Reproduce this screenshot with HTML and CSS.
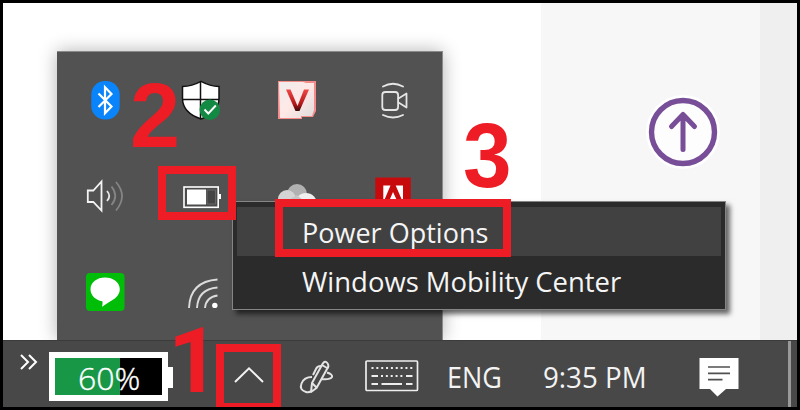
FILE: index.html
```html
<!DOCTYPE html>
<html lang="en">
<head>
<meta charset="utf-8">
<title>System tray</title>
<link rel="stylesheet" href="styles.css">
</head>
<body>
<div class="screen">
  <main class="desktop">
    <div class="page"></div>
    <div class="sidebar">
      <svg class="scroll-top" viewBox="0 0 76 76">
        <circle cx="38" cy="38" r="37" fill="#fff"/>
        <circle cx="38" cy="38" r="31.500" fill="#fdfdfd" stroke="#774e97" stroke-width="5.400"/>
        <path d="M38 55.500V21M26.500 32.500 38 20.500l11.500 12" fill="none" stroke="#774e97" stroke-width="5" stroke-linecap="round" stroke-linejoin="round"/>
      </svg>
    </div>
    <div class="scroll"></div>
    <div class="tray">
      <svg viewBox="0 0 40 40">
        <rect x="6.300" y="1" width="28.400" height="38.500" rx="13.500" fill="#0a84fa"/>
        <path d="M13.500 13.500 26.500 26.500l-6.500 6.700V7.200l6.500 6.700L13.500 27" fill="none" stroke="#fff" stroke-width="2.200"/>
      </svg>
      <svg viewBox="0 0 40 40">
        <path d="M1.500 6.500C8.500 6.200 14 4.500 20 1.300c6 3.200 11.500 4.900 18 5.200v11.800C38 28.500 30 35.500 20 39 9.500 35.500 1.500 28.500 1.500 18.300Z" fill="#fff" stroke="#111" stroke-width="1.500"/>
        <path d="M19.500 1.500V38M2 19.500h36" stroke="#111" stroke-width="1.500"/>
        <circle cx="28.800" cy="29.800" r="10.200" fill="#138a43"/>
        <path d="m23.500 29.500 3.800 4 7.500-8" fill="none" stroke="#fff" stroke-width="1.900"/>
      </svg>
      <svg viewBox="0 0 40 40">
        <defs><linearGradient id="tile" x2="1" y2="1"><stop stop-color="#ededed"/><stop offset=".5" stop-color="#ffe8e6"/><stop offset="1" stop-color="#ddd"/></linearGradient>
        <linearGradient id="vee" x2="0" y2="1"><stop stop-color="#ef4944"/><stop offset=".7" stop-color="#ae1518"/><stop offset="1" stop-color="#330809"/></linearGradient></defs>
        <path d="M1 1h38v30l-3 6H25v2H1Z" fill="#f58c8a"/>
        <path d="M2 2h24l3 1h8v27l-2 6H24v2H3Z" fill="url(#tile)"/>
        <path d="M9 9.500h4.500l7 16.500 6.500-16.500h5L22.500 31h-4Z" fill="url(#vee)"/>
      </svg>
      <svg viewBox="0 0 40 40">
        <g fill="none" stroke="#e5e5e5" stroke-width="1.800" stroke-linecap="round" stroke-linejoin="round">
        <rect x="9.300" y="12" width="15.800" height="18" rx="3"/>
        <path d="M25.500 18.500 33.500 13.500v14l-8-5M10 6.500q10-5.500 20 0M10 35q10 5 20 0"/></g>
      </svg>
      <svg viewBox="0 0 40 40">
        <g fill="none" stroke-width="1.800">
        <path d="M2.800 14.500h5.500l8.200-9v29l-8.200-8.500H2.800Z" stroke="#f4f4f4"/>
        <path d="M22 15q4.500 5 0 10" stroke="#e9e9e9"/>
        <path d="M26.500 10.500q7.500 9.500 0 18.500M31 6q12 14 0 28.500" stroke="#858585"/></g>
      </svg>
      <svg viewBox="0 0 40 40">
        <rect x="3" y="11" width="34.200" height="20.300" fill="#4b4b4b" stroke="#fff" stroke-width="1.600"/>
        <path d="M6 13.500h19v15H6ZM38 18h2v5h-2Z" fill="#fff"/>
        <path d="M26 14h8.500v14H26Z" fill="#454545" stroke="#777" stroke-width=".7"/>
      </svg>
      <svg viewBox="0 0 40 40">
        <circle cx="20" cy="18" r="10" fill="#b1b1b1"/>
        <circle cx="10" cy="23" r="9" fill="#d4d4d4"/>
        <circle cx="29" cy="28" r="11" fill="#efefef"/>
        <path d="m12 24 8-5 8 7H12Z" fill="#c5c5c5"/>
      </svg>
      <svg viewBox="0 0 40 40">
        <rect x="2.300" y="1.500" width="35.500" height="36" fill="#c70b0d"/>
        <path d="M10.300 9.500h7.200l-7.200 17ZM22.700 9.500h7.300v17ZM20 16l8 17h-5l-3-9-3 6h-3Z" fill="#fff"/>
      </svg>
      <svg viewBox="0 0 40 40">
        <rect x="1" y="1" width="38.500" height="38" rx="4" fill="#00bd08"/>
        <path d="M20 5.500c8.200 0 14.800 4.900 14.800 11.700 0 7-6.500 10.500-9.800 12.300l-8 5.300c.5-2 .8-4 .3-5.600C10.500 28 5.500 23.500 5.500 17.200 5.500 10.400 12 5.500 20 5.500Z" fill="#fff"/>
      </svg>
      <svg viewBox="0 0 40 40">
        <g fill="none" stroke="#dcdcdc" stroke-width="1.900"><path d="M8 36Q9 9.500 36.500 7.500M16 36Q17 17 36.500 15.500M24 36Q25 25 36.500 23.500"/></g>
        <circle cx="33.800" cy="33.400" r="2.700" fill="#fff"/>
      </svg>
    </div>
    <ul class="menu">
      <li class="item active"><span class="power">Power Options</span></li>
      <li class="item"><span class="mobility">Windows Mobility Center</span></li>
    </ul>
  </main>
  <footer class="taskbar">
    <svg class="more" viewBox="0 0 20 18"><path d="m2 2 7 7-7 7M10 2l7 7-7 7" fill="none" stroke="#fff" stroke-width="2"/></svg>
    <div class="battery"><span>60%</span></div>
    <svg class="chevron" viewBox="0 0 32 18"><path d="M2 16 16 2.300 30 16" fill="none" stroke="#f3f3f3" stroke-width="2"/></svg>
    <svg class="pen" viewBox="0 0 36 36">
      <g fill="none" stroke="#e4e4e4" stroke-width="2" stroke-linejoin="round">
      <path d="m12 33 1-9L23.500 5q2.500-4 4.800-1t-.3 6L17.500 29ZM23 6l5 3M13 24l4 4"/>
      <path d="M22 7q-4 0-5 3l-3 6M13 18Q5 18 2.500 24.500T7 33q3 1 5-1M28 13.500q6 2 5 4.500-2 3-11 2"/></g>
    </svg>
    <svg class="keyboard" viewBox="0 0 56 34">
      <rect x="2" y="2" width="51.500" height="29.500" rx="1" fill="none" stroke="#eee" stroke-width="1.700"/>
      <g fill="none" stroke="#eee" stroke-width="2"><path d="M7.500 9h41" stroke-dasharray="2 2.850"/><path d="M7.500 17H14M42 17h6.500M7.500 25H14M17.500 25H38M42 25h6.500"/><path d="M17 17h22" stroke-dasharray="2 2.850"/></g>
    </svg>
    <span class="lang">ENG</span>
    <span class="clock">9:35 PM</span>
    <svg class="notice" viewBox="0 0 40 40"><path d="M.500 1h39v31H27l-8.500 7.500L11 32H.500Z" fill="#fff"/><path d="M9 10h22M9 16.300h22M9 22.700h14.500" stroke="#505050" stroke-width="1.700"/></svg>
    <div class="peek"></div>
  </footer>
  <div class="mark mark-tray"></div>
  <div class="mark mark-battery"></div>
  <div class="mark mark-option"></div>
  <b class="step one">1</b>
  <b class="step two">2</b>
  <b class="step three">3</b>
</div>
</body>
</html>
```

FILE: styles.css
```css
* { box-sizing: border-box; }
body { margin: 0; background: #000; font-family: "Open Sans", "Noto Sans", sans-serif; }
svg { display: block; flex: none; }
.screen {
  position: relative;
  width: 800px;
  height: 410px;
  padding: 3px;
  background: #000;
}
.desktop {
  display: grid;
  grid-template-columns: 538px 219px 37px;
  height: 337px;
  overflow: hidden;
}
.page { background: #fff; }
.sidebar { background: #f7f7f7; padding: 91px 0 0 104px; }
.scroll { background: #efefef; }
.scroll-top { width: 76px; height: 76px; }
.tray {
  position: absolute;
  left: 57px;
  top: 51px;
  width: 386px;
  height: 289px;
  border: 1px solid #8a8a8a;
  border-width: 1px 1px 0 0;
  background: #525252;
  display: grid;
  grid-template: repeat(3, 96px) / repeat(4, 96px);
  place-items: center;
  box-shadow: 0 0 17px rgba(0, 0, 0, .3);
  clip-path: inset(-40px -40px 0 -40px);
}
.tray svg { width: 40px; height: 40px; }
.menu {
  position: absolute;
  left: 232px;
  top: 201px;
  width: 494px;
  height: 109px;
  margin: 0;
  padding: 5px 4px;
  list-style: none;
  border: 1px solid #858585;
  background: #2b2b2b;
  box-shadow: 4px 4px 5px rgba(0, 0, 0, .6);
}
.item {
  height: 49px;
  padding-left: 65px;
  color: #f5f5f5;
  font-size: 28px;
  line-height: 51px;
  white-space: nowrap;
}
.active { background: #414141; }
.item span, .lang, .clock, .battery span { display: inline-block; transform-origin: left center; }
.power { transform: scaleX(.965); }
.mobility { transform: scaleX(.98); }
.taskbar {
  display: flex;
  height: 67px;
  background: #484848;
  border-top: 1px solid #3b3b3b;
  color: #f3f3f3;
}
.more { width: 20px; height: 18px; margin: 12px 0 0 16px; }
.battery {
  position: relative;
  width: 119px;
  height: 49px;
  margin: 11px 0 0 10px;
  flex: none;
  border: 6px solid #fff;
  background: linear-gradient(90deg, #189747 65px, #000 65px);
  color: #fff;
  font-size: 32px;
  font-weight: 300;
  line-height: 40px;
  -webkit-text-stroke: .4px #fff;
}
.battery::after {
  content: "";
  position: absolute;
  left: 112px;
  top: 9px;
  width: 6px;
  height: 21px;
  background: #fff;
}
.battery span { margin-left: 23px; }
.chevron { width: 32px; height: 18px; margin: 25px 0 0 65px; }
.pen { width: 36px; height: 36px; margin: 18px 0 0 34px; }
.keyboard { width: 56px; height: 34px; margin: 18px 0 0 29px; }
.lang, .clock { flex: none; font-size: 29px; line-height: 40px; margin-top: 16px; white-space: nowrap; }
.lang { width: 54px; margin-left: 27px; transform: scaleX(.93); }
.clock { width: 104px; margin-left: 42px; transform: scaleX(.955); }
.notice { width: 40px; height: 40px; margin: 16px 0 0 52px; }
.peek { width: 3px; margin-left: auto; margin-right: 6px; background: #999; }
.mark { position: absolute; border: 8px solid #ee1c25; }
.mark-tray { left: 216px; top: 344px; width: 65px; height: 63px; border-bottom-width: 4px; }
.mark-battery { left: 158px; top: 166px; width: 78px; height: 54px; }
.mark-option { left: 275px; top: 199px; width: 236px; height: 58px; }
.step {
  position: absolute;
  color: #ee1c25;
  font: bold 90px/90px "Liberation Sans", Arial, sans-serif;
}
.one { left: 168px; top: 317px; font-family: Roboto, sans-serif; }
.two { left: 130px; top: 71px; }
.three { left: 463px; top: 111px; transform: scaleX(.97); transform-origin: left; }
```
